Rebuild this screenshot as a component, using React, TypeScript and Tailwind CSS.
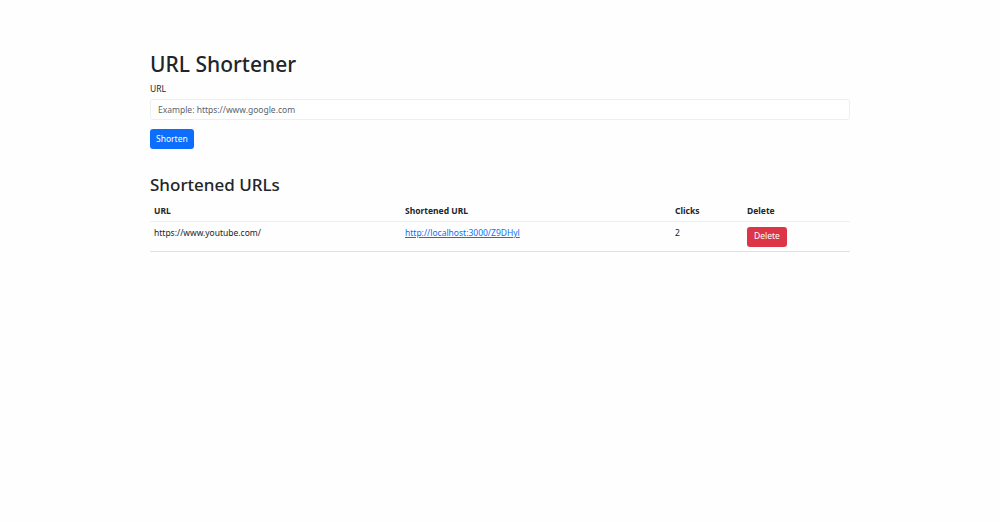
export default function App() {
  const rows = [{ url: "https://www.youtube.com/", short: "http://localhost:3000/Z9DHyl", clicks: 2 }];

  return (
    <div className="min-h-[522px] bg-[#fefefe] text-[#212529] font-['Noto_Sans',sans-serif]">
      <div className="w-[700px] mx-auto pt-[51px]">
        <h1 className="text-[21px] leading-[27px] font-medium">URL Shortener</h1>
        <label className="block text-[8.5px] leading-[12px] mt-[5px]">URL</label>
        <input
          className="block w-full h-[21px] mt-[4px] px-[7px] text-[8.5px] border border-[#eceef0] rounded-[3px] bg-white outline-none placeholder:text-[#5c636a]"
          placeholder="Example: https://www.google.com"
        />
        <button className="mt-[9px] h-[20px] px-[6px] text-[8.5px] text-white bg-[#0d6efd] rounded-[3px]">
          Shorten
        </button>

        <h2 className="text-[17px] leading-[22px] font-medium mt-[25px]">Shortened URLs</h2>
        <table className="w-full mt-[4px] text-[8.5px] border-collapse">
          <thead>
            <tr className="border-b border-[#eceef0]">
              <th className="text-left font-bold px-[4px] pt-[5px] pb-[3px] w-[251px]">URL</th>
              <th className="text-left font-bold px-[4px] pt-[5px] pb-[3px] w-[270px]">Shortened URL</th>
              <th className="text-left font-bold px-[4px] pt-[5px] pb-[3px] w-[72px]">Clicks</th>
              <th className="text-left font-bold px-[4px] pt-[5px] pb-[3px]">Delete</th>
            </tr>
          </thead>
          <tbody>
            {rows.map((r) => (
              <tr key={r.short} className="border-b border-[#dee2e6]">
                <td className="px-[4px] pt-[5px] pb-0 align-top h-[30px]">{r.url}</td>
                <td className="px-[4px] pt-[5px] pb-0 align-top">
                  <a href="#" className="text-[#0d6efd] underline">{r.short}</a>
                </td>
                <td className="px-[4px] pt-[5px] pb-0 align-top">{r.clicks}</td>
                <td className="px-[4px] pt-[5px] pb-0 align-top">
                  <button className="h-[20px] px-[7px] text-[8.5px] text-white bg-[#dc3545] rounded-[3px]">Delete</button>
                </td>
              </tr>
            ))}
          </tbody>
        </table>
      </div>
    </div>
  );
}
